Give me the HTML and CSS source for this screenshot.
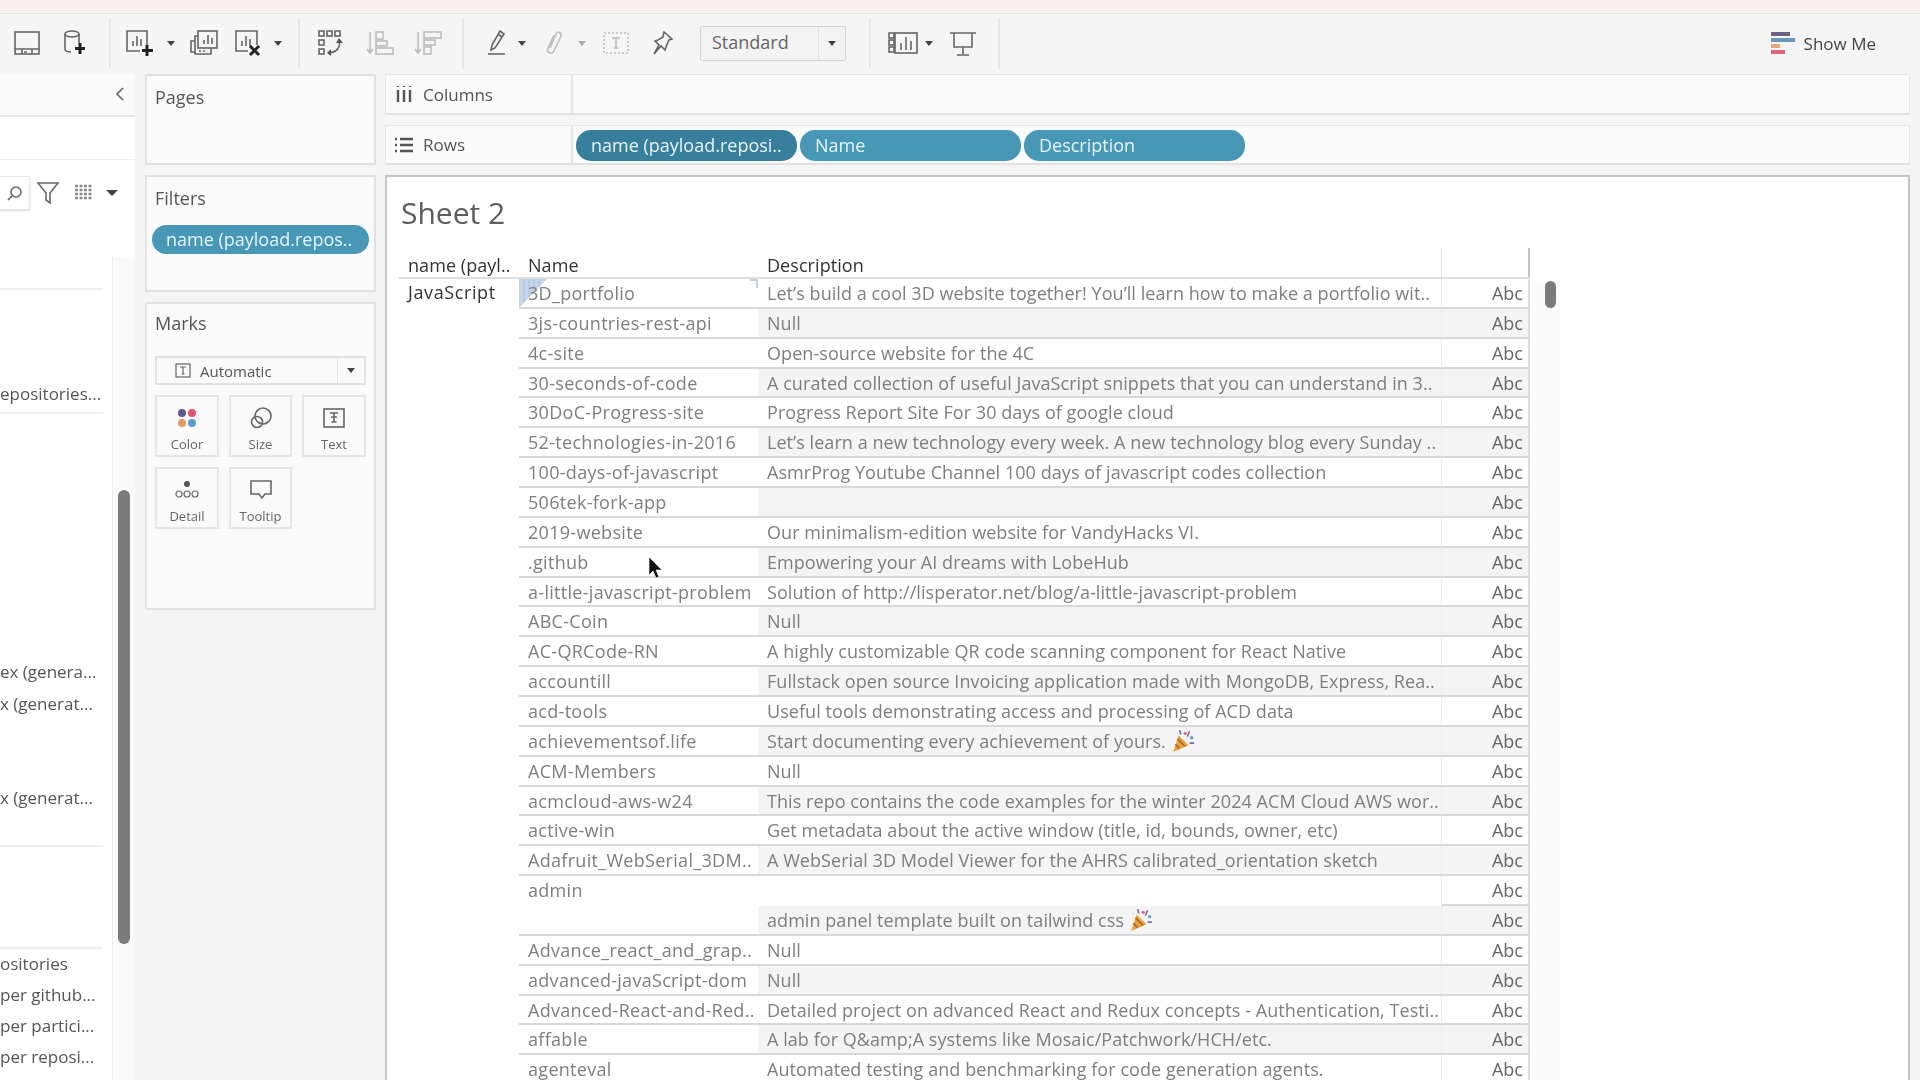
FILE: index.html
```html
<!DOCTYPE html>
<html lang="en">
<head>
<meta charset="utf-8">
<title>Sheet 2</title>
<link rel="stylesheet" href="styles.css">
</head>
<body>
<div class="app">
  <div class="topband"></div>
  <div class="toolbar">
    <svg class="ic ml14" width="26" height="24" viewBox="0 0 26 24"><rect x="1" y="1" width="24" height="22"/><path d="M1 18h24M8 23v-5h10v5M10 21h3"/></svg>
    <svg class="ic ml23" width="23" height="26" viewBox="0 0 23 26"><path d="M2 4v15c0 2 2 3 6 3M16 4v9"/><ellipse cx="9" cy="4" rx="7" ry="3"/><path class="plus" d="M17 13v11M12 18.500h10"/></svg>
    <div class="sep ml23"></div>
    <svg class="ic ml15" width="29" height="27" viewBox="0 0 29 27"><path d="M21 15V1H1v20h13"/><path d="M7 16v-5M11 16V6M15 16v-7"/><path class="plus" d="M21 15v11M16 20.500h11"/></svg>
    <span class="tri ml12"></span>
    <svg class="ic ml15" width="28" height="26" viewBox="0 0 28 26"><rect x="8" y="1" width="19" height="17"/><path d="M8 6H5v18h16v-6M5 11H1v11h4"/><path d="M14 14v-4M18 14V5M22 14V8M9 21h2M13 21h2"/></svg>
    <svg class="ic ml17" width="27" height="27" viewBox="0 0 27 27"><path d="M22 15V1H1v20h12"/><path d="M7 16v-5M11 16V6M15 16v-7"/><path class="plus" d="M15 16l9 9M24 16l-9 9"/></svg>
    <span class="tri ml12"></span>
    <div class="sep ml16"></div>
    <svg class="ic ml18" width="26" height="26" viewBox="0 0 26 26"><rect x="1" y="1" width="5" height="5"/><rect x="9" y="1" width="5" height="5"/><rect x="17" y="1" width="5" height="5"/><rect x="1" y="10" width="5" height="5"/><rect x="1" y="19" width="5" height="5"/><path d="M21 11c2 6-2 11-10 12"/><path class="solid" d="M21 8l4 5h-7zM9 23l4-4v7z"/></svg>
    <svg class="ic dim ml22" width="28" height="26" viewBox="0 0 28 26"><path d="M4 2v20M1 19l3 4 3-4"/><rect x="10" y="2" width="7" height="7"/><rect x="10" y="11" width="11" height="5"/><rect x="10" y="18" width="17" height="6"/></svg>
    <svg class="ic dim ml20" width="28" height="26" viewBox="0 0 28 26"><path d="M4 2v20M1 19l3 4 3-4"/><rect x="10" y="2" width="17" height="6"/><rect x="10" y="10" width="11" height="5"/><rect x="10" y="17" width="7" height="7"/></svg>
    <div class="sep ml20"></div>
    <svg class="ic ml24" width="17" height="26" viewBox="0 0 17 26"><path d="M12 1l4 3-9 14-4 2 1-5zM10 4l4 3"/><path d="M0 24h17" /></svg>
    <span class="tri ml13"></span>
    <svg class="ic dim ml19" width="19" height="26" viewBox="0 0 19 26"><path d="M5 18l6-14c1-3 6-2 5 2l-7 15c-2 4-8 2-6-3l6-13"/></svg>
    <span class="tri dimtri ml14"></span>
    <svg class="ic dim ml17" width="26" height="22" viewBox="0 0 26 22"><rect class="dash" x="1" y="1" width="24" height="20"/><path d="M9 6h8M13 6v10M11 16h4"/></svg>
    <svg class="ic ml24" width="20" height="24" viewBox="0 0 20 24"><path d="M11 1l8 7-3 1-3 7-1 3-4-4-7 8 5-9-4-4 3-1 5-3z"/></svg>
    <div class="combo ml27"><span class="combo-text">Standard</span><span class="combo-btn"><span class="tri"></span></span></div>
    <div class="sep ml23"></div>
    <svg class="ic ml17" width="30" height="22" viewBox="0 0 30 22"><rect x="7" y="1" width="22" height="20"/><rect x="1" y="1" width="5" height="5"/><rect x="1" y="8" width="5" height="5"/><rect x="1" y="15" width="5" height="5"/><path d="M13 18v-7M18 18V5M23 18V9"/></svg>
    <span class="tri ml7"></span>
    <svg class="ic ml17" width="26" height="25" viewBox="0 0 26 25"><path d="M0 2h26M4 2v14h18V2M13 16v7M7 24h12"/></svg>
    <div class="sep ml22"></div>
    <div class="showme">
      <svg width="24" height="23" viewBox="0 0 24 23"><rect width="19" height="4" fill="#6b6283"/><rect y="6" width="24" height="4" fill="#6a97bd"/><rect y="12" width="9" height="4" fill="#eba67b"/><rect y="18" width="14" height="4" fill="#d9667a"/></svg>
      <span>Show Me</span>
    </div>
  </div>

  <div class="main">
    <aside class="data">
      <div class="data-head"><svg class="ic" width="10" height="16" viewBox="0 0 10 16"><path d="M8 2L2 8l6 6"/></svg></div>
      <div class="data-blank"></div>
      <div class="data-search">
        <div class="searchbox"><svg class="ic" width="16" height="16" viewBox="0 0 16 16"><circle cx="9" cy="7" r="5"/><path d="M5 11l-4 4"/></svg></div>
        <svg class="ic funnel" width="22" height="24" viewBox="0 0 22 24"><path d="M1 2h20l-8 10v10l-4-3v-7z"/></svg>
        <svg class="ic gridicon" width="20" height="18" viewBox="0 0 20 18"><path class="dots" d="M1 2h18M1 6h18M1 10h18M1 14h18"/></svg>
        <span class="tri triwide"></span>
      </div>
      <div class="data-body">
        <div class="data-list">
          <div class="rule rule-a"></div>
          <div class="field field-a">epositories...</div>
          <div class="rule rule-b"></div>
          <div class="field field-c">ex (genera...</div>
          <div class="field field-d">x (generat...</div>
          <div class="field field-e">x (generat...</div>
          <div class="rule rule-f"></div>
          <div class="rule rule-g"></div>
          <div class="field field-h">ositories</div>
          <div class="field field-i">per github...</div>
          <div class="field field-i">per partici...</div>
          <div class="field field-i">per reposi...</div>
        </div>
        <div class="data-track"><div class="data-thumb"></div></div>
      </div>
    </aside>

    <section class="cards">
      <div class="panel pages"><h2>Pages</h2></div>
      <div class="panel filters">
        <h2>Filters</h2>
        <div class="pill filter-pill">name (payload.repos..</div>
      </div>
      <div class="panel marks">
        <h2>Marks</h2>
        <div class="mark-select">
          <svg class="ic thin" width="16" height="15" viewBox="0 0 16 15"><rect x="1" y="1" width="14" height="13"/><path d="M5 4h6M8 4v7M6.500 11h3"/></svg>
          <span class="mark-label">Automatic</span>
          <span class="mark-btn"><span class="tri"></span></span>
        </div>
        <div class="mark-grid">
          <div class="mark-card">
            <svg width="20" height="20" viewBox="0 0 20 20"><circle cx="5" cy="5" r="4" fill="#635a86"/><circle cx="15" cy="5" r="4" fill="#e0566b"/><circle cx="5" cy="15" r="4" fill="#e59a68"/><circle cx="15" cy="15" r="4" fill="#5e9bcb"/></svg>
            <span>Color</span>
          </div>
          <div class="mark-card">
            <svg class="ic" width="22" height="22" viewBox="0 0 22 22"><circle cx="13" cy="9" r="8"/><circle cx="7" cy="15" r="5.500"/></svg>
            <span>Size</span>
          </div>
          <div class="mark-card">
            <svg class="ic" width="22" height="20" viewBox="0 0 22 20"><rect x="1" y="1" width="20" height="18"/><path d="M7 5h8M11 5v9M8.500 14h5M8 9h6"/></svg>
            <span>Text</span>
          </div>
          <div class="mark-card">
            <svg class="ic thin" width="24" height="20" viewBox="0 0 24 20"><circle class="solid" cx="12" cy="4" r="3"/><circle cx="4" cy="14" r="3"/><circle cx="12" cy="14" r="3"/><circle cx="20" cy="14" r="3"/></svg>
            <span>Detail</span>
          </div>
          <div class="mark-card">
            <svg class="ic" width="22" height="20" viewBox="0 0 22 20"><path d="M1 1h20v13h-6l-3 4-3-4H1z"/></svg>
            <span>Tooltip</span>
          </div>
        </div>
      </div>
    </section>

    <section class="view">
      <div class="shelf">
        <div class="shelf-label">
          <svg class="ic shelf-ic" width="16" height="18" viewBox="0 0 16 18"><path class="bars" d="M2 5v12M8 5v12M14 5v12M2 1v1M8 1v1M14 1v1"/></svg>
          <span>Columns</span>
        </div>
        <div class="shelf-body"></div>
      </div>
      <div class="shelf shelf-rows">
        <div class="shelf-label">
          <svg class="ic shelf-ic" width="18" height="16" viewBox="0 0 18 16"><path class="bars" d="M5 2h13M5 8h13M5 14h13M0 2h2M0 8h2M0 14h2"/></svg>
          <span>Rows</span>
        </div>
        <div class="shelf-body pills">
          <div class="pill pill-a">name (payload.reposi..</div>
          <div class="pill pill-b">Name</div>
          <div class="pill pill-b">Description</div>
        </div>
      </div>
      <div class="sheet">
        <h1>Sheet 2</h1>
        <div class="tablewrap">
          <div class="table">
            <div class="thead">
              <div class="th">name (payl..</div>
              <div class="th">Name</div>
              <div class="th">Description</div>
              <div class="th th-line"></div>
            </div>
            <div class="tbody">
              <div class="js">JavaScript</div>
              <div class="rows">
                <div class="n first"><svg class="sel" width="28" height="29" viewBox="0 0 28 29"><path d="M0 0h28L0 29z" fill="#c4d6e8"/><path d="M5 0v23M10 0v18M15 0v13M20 0v8" stroke="#a9c3dc"/></svg><svg class="tick" width="8" height="9" viewBox="0 0 8 9"><path d="M0 1h7v8" fill="none" stroke="#a9c3dc" stroke-width="1.500"/></svg><span>3D_portfolio</span></div><div class="d">Let’s build a cool 3D website together! You’ll learn how to make a portfolio wit..</div><div class="a">Abc</div>
                <div class="n">3js-countries-rest-api</div><div class="d s">Null</div><div class="a s">Abc</div>
                <div class="n">4c-site</div><div class="d">Open-source website for the 4C</div><div class="a">Abc</div>
                <div class="n">30-seconds-of-code</div><div class="d s">A curated collection of useful JavaScript snippets that you can understand in 3..</div><div class="a s">Abc</div>
                <div class="n">30DoC-Progress-site</div><div class="d">Progress Report Site For 30 days of google cloud</div><div class="a">Abc</div>
                <div class="n">52-technologies-in-2016</div><div class="d s">Let’s learn a new technology every week. A new technology blog every Sunday ..</div><div class="a s">Abc</div>
                <div class="n">100-days-of-javascript</div><div class="d">AsmrProg Youtube Channel 100 days of javascript codes collection</div><div class="a">Abc</div>
                <div class="n">506tek-fork-app</div><div class="d s"></div><div class="a s">Abc</div>
                <div class="n">2019-website</div><div class="d">Our minimalism-edition website for VandyHacks VI.</div><div class="a">Abc</div>
                <div class="n">.github</div><div class="d s">Empowering your AI dreams with LobeHub</div><div class="a s">Abc</div>
                <div class="n">a-little-javascript-problem</div><div class="d">Solution of http://lisperator.net/blog/a-little-javascript-problem</div><div class="a">Abc</div>
                <div class="n">ABC-Coin</div><div class="d s">Null</div><div class="a s">Abc</div>
                <div class="n">AC-QRCode-RN</div><div class="d">A highly customizable QR code scanning component for React Native</div><div class="a">Abc</div>
                <div class="n">accountill</div><div class="d s">Fullstack open source Invoicing application made with MongoDB, Express, Rea..</div><div class="a s">Abc</div>
                <div class="n">acd-tools</div><div class="d">Useful tools demonstrating access and processing of ACD data</div><div class="a">Abc</div>
                <div class="n">achievementsof.life</div><div class="d s">Start documenting every achievement of yours. <svg class="party" width="24" height="24" viewBox="0 0 22 22"><path d="M2 21L7 6l9 9z" fill="#e3a63a"/><path d="M4 14l4 4M6 9l7 7" stroke="#b9602e" stroke-width="1.500"/><circle cx="13" cy="4" r="1.500" fill="#d9667a"/><circle cx="19" cy="8" r="1.500" fill="#5e9bcb"/><path d="M17 2l-2 5M21 13h-4M8 1l1 4" stroke="#7f6aa8" stroke-width="1.500"/></svg></div><div class="a s">Abc</div>
                <div class="n">ACM-Members</div><div class="d">Null</div><div class="a">Abc</div>
                <div class="n">acmcloud-aws-w24</div><div class="d s">This repo contains the code examples for the winter 2024 ACM Cloud AWS wor..</div><div class="a s">Abc</div>
                <div class="n">active-win</div><div class="d">Get metadata about the active window (title, id, bounds, owner, etc)</div><div class="a">Abc</div>
                <div class="n">Adafruit_WebSerial_3DM..</div><div class="d s">A WebSerial 3D Model Viewer for the AHRS calibrated_orientation sketch</div><div class="a s">Abc</div>
                <div class="n span">admin</div><div class="d noline"></div><div class="a">Abc</div>
                <div class="d s">admin panel template built on tailwind css <svg class="party" width="24" height="24" viewBox="0 0 22 22"><path d="M2 21L7 6l9 9z" fill="#e3a63a"/><path d="M4 14l4 4M6 9l7 7" stroke="#b9602e" stroke-width="1.500"/><circle cx="13" cy="4" r="1.500" fill="#d9667a"/><circle cx="19" cy="8" r="1.500" fill="#5e9bcb"/><path d="M17 2l-2 5M21 13h-4M8 1l1 4" stroke="#7f6aa8" stroke-width="1.500"/></svg></div><div class="a s">Abc</div>
                <div class="n">Advance_react_and_grap..</div><div class="d">Null</div><div class="a">Abc</div>
                <div class="n">advanced-javaScript-dom</div><div class="d s">Null</div><div class="a s">Abc</div>
                <div class="n">Advanced-React-and-Red..</div><div class="d">Detailed project on advanced React and Redux concepts - Authentication, Testi..</div><div class="a">Abc</div>
                <div class="n">affable</div><div class="d s">A lab for Q&amp;amp;A systems like Mosaic/Patchwork/HCH/etc.</div><div class="a s">Abc</div>
                <div class="n">agenteval</div><div class="d">Automated testing and benchmarking for code generation agents.</div><div class="a">Abc</div>
              </div>
            </div>
          </div>
          <div class="vscroll"><div class="vthumb"></div></div>
        </div>
        <svg class="cursor" width="14" height="22" viewBox="0 0 14 22"><path d="M1 0v18l4-4 3 7 3-1-3-7h6z" fill="#111" stroke="#fff" stroke-width=".6"/></svg>
      </div>
    </section>
  </div>
</div>
</body>
</html>
```

FILE: styles.css
```css
* { box-sizing: border-box; }
html, body { margin: 0; padding: 0; height: 1080px; overflow: hidden; background: #f5f5f5; }
body { font-family: "Open Sans", "Noto Sans", sans-serif; color: #555; }
h1, h2 { margin: 0; font-weight: 400; }

.app { width: 1920px; height: 1080px; display: flex; flex-direction: column; overflow: hidden; filter: blur(0.6px); }
.topband { height: 14px; flex: none; background: #f6f0ee; border-bottom: 1px solid #e4e2e1; }

.toolbar { height: 60px; flex: none; display: flex; align-items: center; padding-bottom: 2px; background: #f5f5f5; }
.ic { fill: none; stroke: #666; stroke-width: 1.6; flex: none; }
.ic.thin { stroke-width: 1.2; }
.ic.dim { stroke: #bdbdbd; }
.ic .plus { stroke: #222; stroke-width: 3; }
.ic .solid { fill: #555; stroke: none; }
.ic .dash { stroke-dasharray: 2 2; }
.ic .bars { stroke: #555; stroke-width: 2.4; }
.ic .dots { stroke: #888; stroke-width: 2.4; stroke-dasharray: 3 1.500; }
.sep { width: 2px; height: 51px; background: #e6e6e6; flex: none; }
.tri { width: 0; height: 0; flex: none; border-left: 4px solid transparent; border-right: 4px solid transparent; border-top: 5px solid #444; }
.dimtri { border-top-color: #aaa; }
.triwide { border-left-width: 6px; border-right-width: 6px; border-top-width: 6px; }
.ml7 { margin-left: 7px; } .ml12 { margin-left: 12px; } .ml13 { margin-left: 13px; } .ml14 { margin-left: 14px; }
.ml15 { margin-left: 15px; } .ml16 { margin-left: 16px; } .ml17 { margin-left: 17px; } .ml18 { margin-left: 18px; }
.ml19 { margin-left: 19px; } .ml20 { margin-left: 20px; } .ml22 { margin-left: 22px; } .ml23 { margin-left: 23px; }
.ml24 { margin-left: 24px; } .ml27 { margin-left: 27px; }

.combo { width: 146px; height: 35px; flex: none; display: flex; background: #f3f3f3; border: 1px solid #d4d4d4; border-radius: 2px; }
.combo-text { flex: 1; padding-left: 11px; font-size: 18px; line-height: 31px; color: #666; }
.combo-btn { width: 27px; display: flex; align-items: center; justify-content: center; border-left: 1px solid #e2e2e2; }
.showme { margin-left: auto; margin-right: 44px; display: flex; align-items: center; gap: 9px; font-size: 17px; color: #444; }

.main { flex: 1; display: flex; min-height: 0; }

.data { width: 135px; flex: none; display: flex; flex-direction: column; background: #fff; }
.data-head { height: 43px; flex: none; display: flex; align-items: center; justify-content: flex-end; padding: 0 10px 2px 0; background: #fafafa; border-bottom: 2px solid #e6e6e6; }
.data-blank { height: 43px; flex: none; border-bottom: 1px solid #eee; }
.data-search { height: 65px; padding: 7px 0; flex: none; display: flex; align-items: center; }
.searchbox { width: 30px; height: 34px; display: flex; align-items: center; justify-content: center; background: #fff; border: 1px solid #e6e6e6; border-left: 0; box-shadow: 0 1px 2px #ddd; }
.funnel { margin-left: 7px; }
.gridicon { margin-left: 15px; }
.triwide { margin-left: 12px; }
.data-body { flex: 1; display: flex; min-height: 0; }
.data-list { width: 112px; padding-top: 63px; flex: none; }
.rule { width: 103px; height: 2px; background: #eeeeee; }
.field { font-size: 17px; line-height: 24px; color: #555; white-space: nowrap; }
.field-a { margin-top: 92px; }
.rule-b { margin-top: 6px; }
.field-c { margin-top: 246px; }
.field-d { margin-top: 8px; }
.field-e { margin-top: 70px; }
.rule-f { margin-top: 35px; }
.rule-g { margin-top: 100px; }
.field-h { margin-top: 3px; }
.field-i { margin-top: 7px; }
.data-track { width: 23px; flex: none; margin-top: 32px; background: #fafafa; border-left: 1px solid #ececec; padding-top: 233px; height: 830px; }
.data-thumb { width: 12px; height: 454px; margin-left: 5px; border-radius: 6px; background: #7b7b7b; }

.cards { width: 231px; flex: none; margin-left: 10px; display: flex; flex-direction: column; gap: 10px; }
.panel { background: #fafafa; border: 2px solid #e2e2e2; padding: 0 8px; }
.panel h2 { font-size: 18px; color: #555; line-height: 24px; }
.pages { height: 91px; padding-top: 9px; }
.filters { height: 117px; padding-top: 9px; }
.marks { height: 308px; padding-top: 7px; }
.pill { border-radius: 15px; color: #e8f4f8; font-size: 18px; white-space: nowrap; background: #4797b6; }
.filter-pill { margin: 15px -3px 0; height: 29px; line-height: 28px; padding-left: 14px; }
.mark-select { margin-top: 21px; height: 29px; display: flex; align-items: center; padding-left: 18px; background: #fafafa; border: 2px solid #e2e2e2; }
.mark-label { margin-left: 9px; font-size: 15px; flex: 1; }
.mark-btn { width: 27px; height: 100%; display: flex; align-items: center; justify-content: center; border-left: 1px solid #e6e6e6; }
.mark-grid { margin-top: 10px; display: grid; grid-template-columns: 64px 63px 64px; grid-auto-rows: 62px; gap: 10px; }
.mark-card { display: flex; flex-direction: column; align-items: center; padding-top: 9px; border: 2px solid #e6e6e6; font-size: 13px; color: #666; }
.mark-card svg { height: 24px; }
.mark-card span { margin-top: 5px; }

.view { flex: 1; margin: 0 10px 0 9px; min-width: 0; display: flex; flex-direction: column; }
.shelf { height: 41px; flex: none; margin-bottom: 10px; display: flex; background: #fafafa; border: 1px solid #e6e6e6; border-bottom: 2px solid #e2e2e2; }
.shelf-rows { height: 40px; }
.shelf-label { width: 187px; flex: none; display: flex; align-items: center; padding-left: 9px; gap: 10px; font-size: 17px; color: #555; border-right: 2px solid #e6e6e6; }
.shelf-ic { width: 18px; }
.shelf-body { flex: 1; }
.pills { display: flex; gap: 3px; padding: 4px 0 0 3px; }
.pills .pill { height: 31px; line-height: 30px; width: 221px; padding-left: 15px; }
.pills .pill-a { background: #377f9c; }

.sheet { flex: 1; position: relative; min-height: 0; overflow: hidden; background: #fff; border: 2px solid #c4c4c4; border-bottom: 0; padding: 14px 0 0 12px; }
.sheet h1 { font-size: 30px; line-height: 44px; margin: 0 0 13px 2px; color: #5d5d5d; font-weight: 400; }
.tablewrap { display: flex; }
.table { width: 1131px; flex: none; font-size: 18px; letter-spacing: 0.06px; }
.thead { display: grid; grid-template-columns: 120px 239px 683px 89px; height: 31px; color: #333; border-bottom: 2px solid #dedede; background-image: linear-gradient(#e4e4e4, #e4e4e4); background-size: 1px 100%; background-position: 1042px 0; background-repeat: no-repeat; }
.th { padding-left: 9px; line-height: 27px; padding-top: 4px; white-space: nowrap; overflow: hidden; }
.th-line { border-left: 1px solid #e4e4e4; border-right: 2px solid #c4c4c4; }
.tbody { display: flex; }
.js { width: 120px; flex: none; padding: 0 0 0 9px; line-height: 26px; color: #333; letter-spacing: 0.6px; }
.rows { flex: 1; display: grid; grid-template-columns: 239px 683px 89px; grid-auto-rows: 29.870px; color: #7e7e7e; }
.n, .d, .a { position: relative; border-bottom: 2px solid #d8d8d8; padding-left: 9px; line-height: 28px; white-space: nowrap; overflow: hidden; }
.n { letter-spacing: 0.3px; }
.s { background: #f4f4f4; }
.a { padding: 0 5px 0 0; text-align: right; border-left: 1px solid #ececec; border-right: 2px solid #dcdcdc; color: #666; letter-spacing: 0; }
.span { grid-row: span 2; }
.noline { border-bottom: 0; }
.first span { position: relative; }
.sel { position: absolute; left: 0; top: 0; }
.tick { position: absolute; right: 0; top: 0; }
.party { vertical-align: -5px; }
.vscroll { width: 25px; margin-left: 5px; padding: 0 0 0 10px; margin-top: 33px; height: 830px; background: #fbfbfb; flex: none; }
.vthumb { width: 11px; height: 27px; border-radius: 6px; background: #7b7b7b; }
.cursor { position: absolute; left: 261px; top: 380px; }
```
